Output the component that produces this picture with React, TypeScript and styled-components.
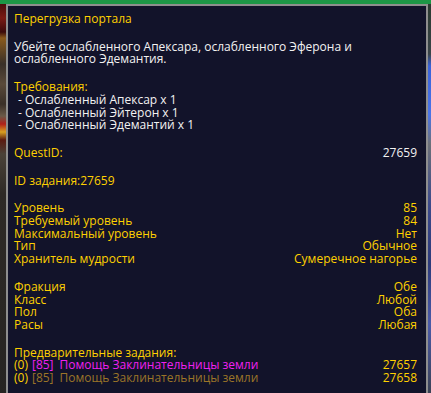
import React from "react";
import styled, { createGlobalStyle } from "styled-components";

const GOLD = "#ffd100";
const WHITE = "#f2f2f2";
const MAGENTA = "#f020f0";
const BROWN = "#9c7528";

const Global = createGlobalStyle`
  html, body { margin: 0; padding: 0; background: #12132a; }
  body { width: 431px; height: 393px; overflow: hidden; }
`;

const Page = styled.div`
  width: 431px;
  height: 393px;
  display: flex;
  flex-direction: column;
  overflow: hidden;
  background: #12132a;
`;

const TopBar = styled.div`
  flex: none;
  height: 4px;
  background: #1d9646;
`;

const Body = styled.div`
  flex: 1;
  display: flex;
  min-height: 0;
`;

const LeftArt = styled.div`
  flex: none;
  width: 6px;
  background: linear-gradient(
    180deg,
    #4a0c0c 0px,
    #7a1a14 14px,
    #3c0b0b 28px,
    #8a5a1c 34px,
    #6b4a22 44px,
    #3a3028 60px,
    #5a4a3a 80px,
    #3a3028 100px,
    #6a5a48 112px,
    #b0201a 120px,
    #d8a020 128px,
    #5a1a10 136px,
    #4a4238 150px,
    #2e2a26 190px,
    #262422 393px
  );
`;

const RightArt = styled.div`
  flex: none;
  width: 3px;
  background: linear-gradient(
    180deg,
    #2a3a30 0px,
    #3a4448 50px,
    #3a62d8 62px,
    #4a74e8 110px,
    #6c7078 140px,
    #3c4a8a 200px,
    #2c3a7a 260px,
    #4a5aa8 320px,
    #3a4050 393px
  );
`;

const Tooltip = styled.div`
  flex: 1;
  min-width: 0;
  box-sizing: border-box;
  background: #12132a;
  border: 2px solid #8e8e8e;
  border-bottom: none;
  padding: 7px 9px 0 6px;
  font-family: "Open Sans", "Noto Sans", sans-serif;
  font-size: 12px;
  line-height: 12.7px;
  color: ${GOLD};
  display: flex;
  flex-direction: column;
  gap: 15px;
`;

const Section = styled.div`
  display: flex;
  flex-direction: column;
`;

const Line = styled.div<{ $tone?: "gold" | "white"; $indent?: boolean }>`
  white-space: nowrap;
  color: ${(p) => (p.$tone === "white" ? WHITE : GOLD)};
  padding-left: ${(p) => (p.$indent ? "4px" : "0")};
`;

const Row = styled.div`
  display: flex;
  justify-content: space-between;
  white-space: nowrap;
`;

const Value = styled.span<{ $tone?: "gold" | "white" }>`
  color: ${(p) => (p.$tone === "white" ? WHITE : GOLD)};
`;

const Tag = styled.span<{ $color: string }>`
  color: ${(p) => p.$color};
  margin-left: 4px;
`;

const QuestName = styled.span<{ $color: string }>`
  color: ${(p) => p.$color};
  margin-left: 6px;
`;

const levelRows: [string, string][] = [
  ["Уровень", "85"],
  ["Требуемый уровень", "84"],
  ["Максимальный уровень", "Нет"],
  ["Тип", "Обычное"],
  ["Хранитель мудрости", "Сумеречное нагорье"],
];

const factionRows: [string, string][] = [
  ["Фракция", "Обе"],
  ["Класс", "Любой"],
  ["Пол", "Оба"],
  ["Расы", "Любая"],
];

const prereqs = [
  { color: MAGENTA, id: "27657" },
  { color: BROWN, id: "27658" },
];

export default function App() {
  return (
    <>
      <Global />
      <Page>
        <TopBar />
        <Body>
          <LeftArt />
          <Tooltip>
            <Section>
              <Line>Перегрузка портала</Line>
            </Section>
            <Section>
              <Line $tone="white">Убейте ослабленного Апексара, ослабленного Эферона и</Line>
              <Line $tone="white">ослабленного Эдемантия.</Line>
            </Section>
            <Section>
              <Line>Требования:</Line>
              <Line $tone="white" $indent>- Ослабленный Апексар x 1</Line>
              <Line $tone="white" $indent>- Ослабленный Эйтерон x 1</Line>
              <Line $tone="white" $indent>- Ослабленный Эдемантий x 1</Line>
            </Section>
            <Section>
              <Row>
                <span>QuestID:</span>
                <Value $tone="white">27659</Value>
              </Row>
            </Section>
            <Section>
              <Line>ID задания:27659</Line>
            </Section>
            <Section>
              {levelRows.map(([k, v]) => (
                <Row key={k}>
                  <span>{k}</span>
                  <Value>{v}</Value>
                </Row>
              ))}
            </Section>
            <Section>
              {factionRows.map(([k, v]) => (
                <Row key={k}>
                  <span>{k}</span>
                  <Value>{v}</Value>
                </Row>
              ))}
            </Section>
            <Section>
              <Line>Предварительные задания:</Line>
              {prereqs.map((q) => (
                <Row key={q.id}>
                  <span>
                    (0)
                    <Tag $color={q.color}>[85]</Tag>
                    <QuestName $color={q.color}>Помощь Заклинательницы земли</QuestName>
                  </span>
                  <Value>{q.id}</Value>
                </Row>
              ))}
            </Section>
          </Tooltip>
          <RightArt />
        </Body>
      </Page>
    </>
  );
}
